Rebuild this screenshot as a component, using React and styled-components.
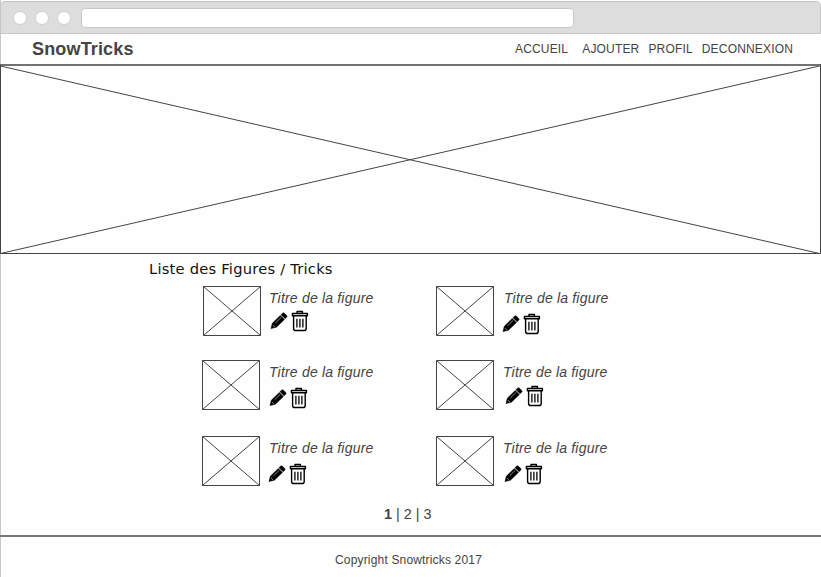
import React from "react";
import styled, { createGlobalStyle } from "styled-components";

const GlobalStyle = createGlobalStyle`
  * { box-sizing: border-box; }
  body { margin: 0; background: #fff; overflow: hidden; }
`;

const Window = styled.div`
  width: 821px;
  height: 577px;
  display: flex;
  flex-direction: column;
  overflow: hidden;
  background: linear-gradient(#c8c8c8, #c8c8c8) left / 1px 100% no-repeat #fefefe;
  font-family: "Liberation Sans", Arial, sans-serif;
  color: #444;
`;

const BrowserBar = styled.div`
  height: 33px;
  margin-top: 1px;
  flex: none;
  display: flex;
  align-items: center;
  padding-left: 12px;
  background: #ddd;
  border: 1px solid #c6c6c6;
  border-radius: 5px 5px 0 0;
`;

const Dot = styled.span`
  width: 14px;
  height: 14px;
  margin-right: 8px;
  border: 1px solid #d0d0d0;
  border-radius: 50%;
  background: #fff;
`;

const AddressField = styled.div`
  width: 493px;
  height: 20px;
  margin-left: 2px;
  border: 1px solid #c8c8c8;
  border-radius: 4px;
  background: #fff;
`;

const Header = styled.header`
  height: 30px;
  flex: none;
  display: flex;
  align-items: center;
  padding: 0 28px 0 32px;
`;

const Brand = styled.div`
  font-size: 18px;
  font-weight: bold;
  line-height: 30px;
  letter-spacing: 0.16px;
  margin-right: auto;
`;

const NavLink = styled.span`
  font-size: 12px;
  letter-spacing: 0.17px;
  line-height: 30px;
  margin-left: ${(p) => p.$gap}px;
`;

const Hero = styled.div`
  height: 190px;
  flex: none;
  svg { display: block; }
`;

const Heading = styled.h1`
  margin: 0 0 0 149px;
  height: 32px;
  flex: none;
  font: 14.7px/30px "DejaVu Sans", Verdana, sans-serif;
  letter-spacing: 0.22px;
  color: #111;
`;

const TrickRow = styled.div`
  display: grid;
  grid-template-columns: 234px auto;
  flex: none;
  height: ${(p) => p.$height}px;
  padding-left: 202px;
`;

const Trick = styled.article`
  display: flex;
  margin-left: ${(p) => p.$shift || 0}px;
`;

const TrickInfo = styled.div`
  display: flex;
  flex-direction: column;
  padding-left: ${(p) => p.$inset}px;
`;

const TrickTitle = styled.div`
  font-size: 14px;
  letter-spacing: 0.19px;
  font-style: italic;
  line-height: 24px;
  white-space: nowrap;
`;

const Actions = styled.div`
  display: flex;
  gap: 3px;
  margin-left: ${(p) => p.$x}px;
  margin-top: ${(p) => p.$y}px;
`;

const Pagination = styled.nav`
  height: 42px;
  flex: none;
  padding-left: 384px;
  font-size: 14.4px;
  line-height: 42px;
  white-space: pre;
`;

const Footer = styled.footer`
  flex: 1;
  border-top: 2px solid #777;
  padding: 15px 0 0 335px;
  font-size: 12px;
  letter-spacing: 0.17px;
  line-height: 16px;
`;

const Placeholder = () => (
  <svg width="58" height="50" fill="none" stroke="#444">
    <path d="M.5.5h57v49H.5z" />
    <path d="M.5.5l57 49M57.5.5l-57 49" />
  </svg>
);

const Pencil = () => (
  <svg width="18" height="20" viewBox="0 -1 18 20">
    <path d="M1 17.6l1.3-5.4L10.3 4.4l4.1 4.1-8 7.7zM11 3.7l1.7-1.6q.9-.7 1.8.1L16.7 4.4q.8.9.1 1.7l-1.7 1.7z" fill="#000" stroke="#000" strokeWidth=".5" strokeLinejoin="round" />
    <path d="M2.8 13.9l2.1 2.1M5.5 11.8l5.7-5.4" stroke="#ddd" strokeWidth=".6" fill="none" />
  </svg>
);

const Trash = () => (
  <svg width="18" height="22" viewBox="0 0 18 22" fill="none" stroke="#000">
    <path d="M6 3.3V1.5h5.4V3.3M1.4 3.5h15v2.3h-15zM2.6 5.8v12.6q0 2.1 2 2.1h8.6q2 0 2-2.1V5.8" strokeWidth="1.4" strokeLinejoin="round" />
    <path d="M5.9 8.7v8.8M8.9 8.7v8.8M11.9 8.7v8.8" strokeWidth="1.3" />
  </svg>
);

const rows = [
  { height: 74, items: [{ shift: 1, inset: 8, x: 1, y: 0 }, { inset: 10, x: -2, y: 3 }] },
  { height: 76, items: [{ inset: 9, x: 0, y: 3 }, { inset: 9, x: 2, y: 1 }] },
  { height: 57, items: [{ inset: 9, x: -1, y: 3 }, { inset: 9, x: 1, y: 3 }] },
];

const links = [
  { label: "ACCUEIL", gap: 0 },
  { label: "AJOUTER", gap: 14 },
  { label: "PROFIL", gap: 9 },
  { label: "DECONNEXION", gap: 9 },
];

export default function App() {
  return (
    <>
      <GlobalStyle />
      <Window>
        <BrowserBar>
          <Dot />
          <Dot />
          <Dot />
          <AddressField />
        </BrowserBar>
        <Header>
          <Brand>SnowTricks</Brand>
          {links.map((l) => (
            <NavLink key={l.label} $gap={l.gap}>{l.label}</NavLink>
          ))}
        </Header>
        <Hero>
          <svg width="821" height="190" fill="none" stroke="#444">
            <path d="M0 1h821" strokeWidth="1.7" />
            <path d="M.5 1v188.5h820V0" />
            <path d="M.5 2l819 187.5M819.5 2L.5 189.5" />
          </svg>
        </Hero>
        <Heading>Liste des Figures / Tricks</Heading>
        {rows.map((row, r) => (
          <TrickRow key={r} $height={row.height}>
            {row.items.map((t, i) => (
              <Trick key={i} $shift={t.shift}>
                <Placeholder />
                <TrickInfo $inset={t.inset}>
                  <TrickTitle>Titre de la figure</TrickTitle>
                  <Actions $x={t.x} $y={t.y}>
                    <Pencil />
                    <Trash />
                  </Actions>
                </TrickInfo>
              </Trick>
            ))}
          </TrickRow>
        ))}
        <Pagination><b>1</b> | 2 | 3</Pagination>
        <Footer>Copyright Snowtricks 2017</Footer>
      </Window>
    </>
  );
}
